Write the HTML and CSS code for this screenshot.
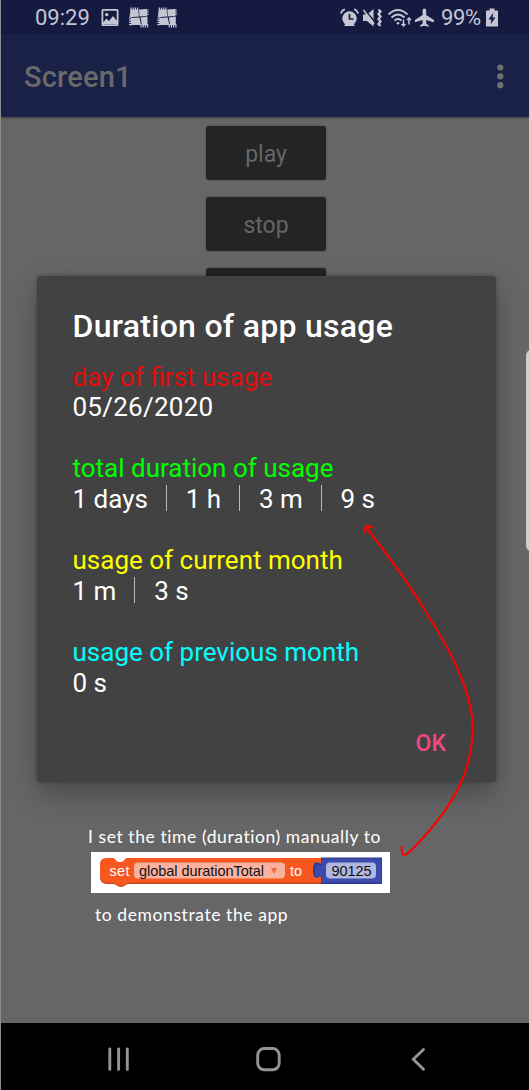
FILE: index.html
```
<!DOCTYPE html>
<html lang="en">
<head>
<meta charset="utf-8">
<title>Screen1</title>
<link rel="stylesheet" href="styles.css">
</head>
<body>
<div class="phone">
  <header class="status">
    <span class="clock">09:29</span>
    <svg class="status-left" width="78" height="22" viewBox="0 0 78 22" fill="#c5c5d4">
      <path fill-rule="evenodd" d="M3 2h14q1.500 0 1.500 1.500v14q0 1.500-1.500 1.500H3q-1.500 0-1.500-1.500v-14Q1.500 2 3 2zM3.300 3.800v13.400h13.400V3.800z"/>
      <circle cx="6.700" cy="7.600" r="1.700"/>
      <path d="M3 15.500l3.500-4 2.500 2.500 4-5 4 5v3H3z"/>
      <g id="patch">
        <path d="M30.500 2.500h7.700l.8 7-9.500 .8zM39 2.500l8-.5v7l-7.500 .5zM31 11l8.500-.5 1.500 7.500H31zM40.500 10.500l7-1V18l-5.500 .5z"/>
        <path d="M31 .5v3M33.200 .5v3M35.400 .5v3M37.600 .5v3M45 3h3.500M45 5.200h3.500M45 7.400h3.500M41 17v3.500M43.200 17v3.500M45.400 17v3.500M47.600 17v3.500M29 11h3M29 13.200h3M29 15.400h3M29 17.600h3" stroke="#c5c5d4" stroke-width="1.200"/>
      </g>
      <use href="#patch" x="28.300"/>
    </svg>
    <svg class="status-right" width="101" height="22" viewBox="0 0 101 22" fill="none" stroke="#c5c5d4">
      <circle cx="10.500" cy="11.500" r="7.200" fill="#c5c5d4" stroke="none"/>
      <path d="M5 19l2-3h7l2 3" fill="#c5c5d4" stroke="none"/>
      <path d="M10.500 7v5h4" stroke="#141a40" stroke-width="1.700"/>
      <path d="M1.800 6.500q1-3 4-4.300M19.200 6.500q-1-3-4-4.300" stroke-width="1.900"/>
      <path d="M24 7.500h4l6.500-5.500v17.500l-6.500-5.500H24z" fill="#c5c5d4" stroke="none"/>
      <path d="M25 2.200l10 11.500" stroke="#141a40" stroke-width="1.500"/>
      <path d="M24.500 3l10.500 14" stroke-width="1.500"/>
      <path d="M39.500 2.500l2 2-2 2.500 2 2.500-2 2.500 2 2.500-2 2.500 2 2" stroke-width="2.300"/>
      <path d="M49.500 7.500q9.500-9 19 0M52.500 10.500q6.500-6 13 0M55.500 13.500q3.500-3 7 0" stroke-width="1.900"/>
      <circle cx="59" cy="16.300" r="1.300" fill="#c5c5d4" stroke="none"/>
      <path d="M64.500 12.500v6.500M62.500 17l2 2 2-2M70 17.500v-6.500M68 13l2-2 2 2" stroke-width="1.500"/>
      <path d="M85.400 1.500q1.800 0 1.800 2v4.500l7.700 5v2.200L87.200 13v3.500l2.500 1.900v1.300l-4.300-1-4.300 1v-1.300l2.500-1.900V13l-7.700 2.200V13l7.700-5V3.500q0-2 1.800-2z" fill="#c5c5d4" stroke="none"/>
    </svg>
    <span class="percent">99%</span>
    <svg class="battery" width="13" height="20" viewBox="0 0 13 20">
      <path d="M3.500 .5h5v2h3q.5 0 .5 .5v15q0 .5-.5 .5H.5q-.5 0-.5-.5V3q0-.5 .5-.5h3z" fill="#c5c5d4"/>
      <path d="M7.300 4.500l-4.800 7h3l-1 5 5-7h-3z" fill="#141a40"/>
    </svg>
  </header>
  <div class="appbar">
    <h1 class="app-title">Screen1</h1>
    <svg class="more" width="8" height="26" viewBox="0 0 8 26" fill="#707070">
      <circle cx="4.300" cy="3.500" r="3.100"/><circle cx="4.300" cy="12.300" r="3.100"/><circle cx="4.300" cy="21.200" r="3.100"/>
    </svg>
  </div>
  <main class="content">
    <div class="button">play</div>
    <div class="button">stop</div>
    <div class="button"></div>
    <div class="note">
      <p class="note-top">I set the time (duration) manually to</p>
      <div class="block-card">
        <svg class="block" width="284" height="32" viewBox="0 0 284 32">
          <path d="M7 2h8q3 4 5 4h2q2 0 5-4h196v25H30q-3 0-5 2.300-3 1.500-6 0-3-2.300-5-2.300H8q-7 0-7-7V8q0-6 6-6z" fill="#c8481f"/>
          <path d="M7 1h8q3 4 5 4h2q2 0 5-4h196v24.500H30q-3 0-5 2.500-3 1.500-6 0-3-2.500-5-2.500H8q-7 0-7-7V8q0-7 6-7z" fill="#f85820"/>
          <rect x="35" y="5.500" width="151" height="16" rx="4" fill="#fab29f"/>
          <path d="M172 11h6l-3 6z" fill="#ef6a3e"/>
          <path d="M222 .5h61v26.500h-61v-7.500q-2 0-3 1-5 2-5-7.500t5-7.500q1 1 3 1z" fill="#2d3b8d"/>
          <path d="M222.500 1.500h59.500v24h-59.500v-7q-2 0-3 1-4 1-4-6t4-6q1 1 3 1z" fill="#3c4bad"/>
          <rect x="227" y="5.500" width="50" height="16" rx="4" fill="#b1b7df"/>
          <text class="block-text light" x="10.500" y="18.500" textLength="20">set</text>
          <text class="block-text" x="40" y="18.500" textLength="125">global durationTotal</text>
          <text class="block-text light" x="191" y="18.500" textLength="12">to</text>
          <text class="block-text" x="232.500" y="18.500" textLength="40">90125</text>
        </svg>
      </div>
      <p class="note-bottom">to demonstrate the app</p>
    </div>
  </main>
  <nav class="nav">
    <svg class="nav-icons" width="529" height="67" viewBox="0 0 529 67" fill="none" stroke="#949494" stroke-width="2.900">
      <path d="M109.800 26v20.500M118.600 26v20.500M127.300 26v20.500" stroke-linecap="round"/>
      <rect x="257.700" y="25.500" width="21.500" height="21.300" rx="6.500"/>
      <path d="M423.500 26.500l-10.200 9.800 10.200 10" stroke-linecap="round"/>
    </svg>
  </nav>

  <section class="dialog">
    <h2 class="dialog-title">Duration of app usage</h2>
    <div class="entry">
      <div class="red">day of first usage</div>
      <div class="date">05/26/2020</div>
    </div>
    <div class="entry">
      <div class="green">total duration of usage</div>
      <div class="values"><span>1 days</span><span>1 h</span><span>3 m</span><span>9 s</span></div>
    </div>
    <div class="entry">
      <div class="yellow">usage of current month</div>
      <div class="values"><span>1 m</span><span>3 s</span></div>
    </div>
    <div class="entry">
      <div class="cyan">usage of previous month</div>
      <div>0 s</div>
    </div>
    <div class="ok">OK</div>
  </section>
  <div class="edge-handle"></div>
  <div class="left-edge"></div>
  <svg class="arrow" width="529" height="1090" viewBox="0 0 529 1090" fill="none" stroke="#f00" stroke-width="2.100" stroke-linecap="round" stroke-linejoin="round">
    <path d="M366 527C390 558 410 586 423.500 608C436 628 446 644 453.500 660C465 684 472.800 706 472.700 729C472.500 750 468 766 461.500 781.500C452 803 440 819 423 838C413 849 407 855 404.500 855C402 855 401.600 852 401.600 847M364.500 532.500L366 526L373 527.300"/>
  </svg>
</div>
</body>
</html>
```

FILE: styles.css
```
* { box-sizing: border-box; }
body { margin: 0; font-family: Roboto, sans-serif; }
h1, h2, p { margin: 0; }

.phone {
  position: relative;
  display: flex;
  flex-direction: column;
  width: 529px;
  height: 1090px;
  overflow: hidden;
  background: #666;
}

.status {
  display: flex;
  align-items: center;
  height: 34px;
  padding: 1px 30px 0 35px;
  background: #141a40;
  color: #c5c5d4;
}
.clock { width: 65px; font-size: 22px; }
.status-right { margin-left: auto; }
.percent { width: 45px; margin-left: 1px; font-size: 22px; letter-spacing: -0.4px; }

.appbar {
  display: flex;
  align-items: center;
  justify-content: space-between;
  height: 83px;
  padding: 2px 25px 0 24px;
  background: #1a2147;
  box-shadow: 0 1px 2px rgba(0, 0, 0, 0.4);
  z-index: 1;
}
.app-title {
  font-size: 29px;
  font-weight: 500;
  letter-spacing: 0.2px;
  color: #6a6a6a;
}

.content {
  display: flex;
  flex: 1;
  flex-direction: column;
  align-items: center;
  gap: 17px;
  padding: 8.500px 0 0 3px;
}
.button {
  width: 120px;
  height: 54px;
  border-radius: 3px;
  background: #242424;
  box-shadow: 0 0 2px rgba(0, 0, 0, 0.35);
  color: #666;
  font-size: 23px;
  line-height: 58px;
  text-align: center;
}

.note {
  align-self: flex-start;
  margin: auto 0 96px 85px;
  color: #fff;
  font: 17.500px/24px Lato, sans-serif;
  letter-spacing: 0.58px;
}
.note-top, .note-bottom { white-space: nowrap; }
.note-bottom { padding-left: 7px; }
.block-card {
  width: 299px;
  height: 41px;
  margin: 3px 0 10px 3px;
  padding: 5px 0 0 7.500px;
  background: #fff;
  letter-spacing: 0;
}
.block { display: block; }
.block-text { font: 14.500px "Liberation Sans", sans-serif; fill: #111; }
.block-text.light { fill: #fff; }

.nav { height: 67px; background: #000; }
.nav-icons { display: block; }

.dialog {
  position: absolute;
  left: 37px;
  top: 276px;
  z-index: 2;
  display: flex;
  flex-direction: column;
  gap: 30.600px;
  width: 459px;
  height: 506px;
  padding: 30px 36px 26px 35.500px;
  border-radius: 3px;
  background: #424242;
  box-shadow: 0 12px 28px rgba(0, 0, 0, 0.28), 0 0 4px rgba(0, 0, 0, 0.25);
  color: #fff;
  font-size: 26px;
  line-height: 30.600px;
}
.dialog-title {
  margin-bottom: -15px;
  font-size: 32px;
  font-weight: 500;
  line-height: 40px;
  letter-spacing: 0.28px;
}
.date { letter-spacing: 0.25px; }
.values { display: flex; }
.values span + span {
  position: relative;
  margin-left: 37.800px;
}
.values span + span::before {
  content: "";
  position: absolute;
  left: -20px;
  top: 1px;
  width: 1.300px;
  height: 26px;
  background: #bbb;
}
.red { color: #e60b0b; }
.green { color: #0f0; }
.yellow { color: #ff0; }
.cyan { color: #0ff; }
.ok {
  margin: auto 14px 0 0;
  color: #f04880;
  font-size: 23px;
  font-weight: 500;
  text-align: right;
}

.edge-handle {
  position: absolute;
  right: -8px;
  top: 350px;
  width: 11px;
  height: 201px;
  border-radius: 8px;
  background: #ccc;
}
.left-edge {
  position: absolute;
  left: 0;
  top: 0;
  z-index: 3;
  width: 1px;
  height: 1090px;
  background: #8c8c8c;
}
.arrow { position: absolute; left: 0; top: 0; z-index: 4; }
```
